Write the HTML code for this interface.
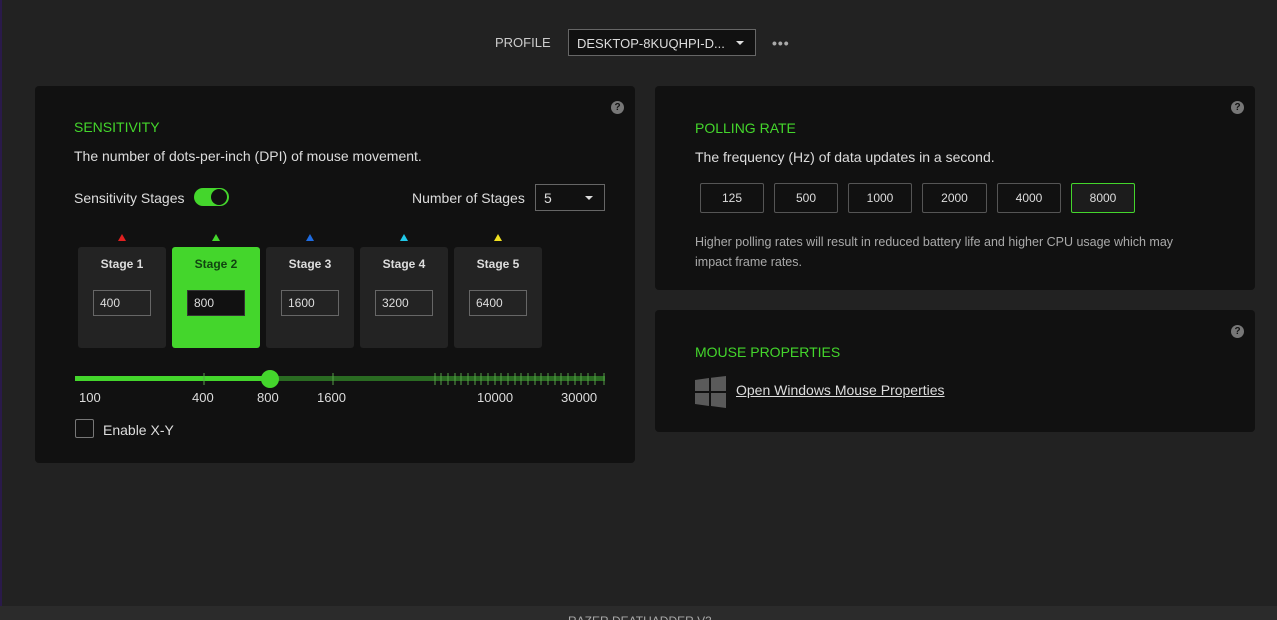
<!DOCTYPE html>
<html><head><style>
*{box-sizing:border-box;margin:0;padding:0}
html,body{width:1277px;height:620px;overflow:hidden}
body{background:#222;font-family:"Liberation Sans",sans-serif;color:#ddd;position:relative}
.abs{position:absolute}
.card{position:absolute;background:#111;border-radius:4px}
.h{position:absolute;color:#44d62c;font-size:14px}
.t{position:absolute;font-size:14px;color:#ddd}
.q{position:absolute;width:13px;height:13px;border-radius:50%;background:#777;color:#111;font-size:10px;font-weight:bold;text-align:center;line-height:13px}
.st{position:absolute;top:247px;width:88px;height:101px;background:#232323;border-radius:3px}
.st .l{position:absolute;top:10px;width:100%;text-align:center;font-size:12px;font-weight:bold;color:#ddd}
.st .i{position:absolute;left:15px;top:43px;width:58px;height:26px;border:1px solid #666;font-size:12px;padding-left:6px;line-height:24px;color:#ddd}
.tri{position:absolute;top:234px;width:0;height:0;border-left:4px solid transparent;border-right:4px solid transparent;border-bottom:7px solid}
.pb{position:absolute;top:183px;height:30px;border:1px solid #555;border-radius:2px;font-size:12px;text-align:center;line-height:28px;color:#ddd}
.lab{position:absolute;top:390px;font-size:13px;color:#ddd}
</style></head><body>
<div class="abs" style="left:0;top:0;width:2px;height:606px;background:#2a1a4a"></div>
<div class="t" style="left:495px;top:35px;font-size:13px;color:#ccc">PROFILE</div>
<div class="abs" style="left:568px;top:29px;width:188px;height:27px;border:1px solid #666;background:#111;font-size:13px;padding:6px 8px;color:#ddd">DESKTOP-8KUQHPI-D...</div>
<div class="abs" style="left:736px;top:41px;border-left:4px solid transparent;border-right:4px solid transparent;border-top:4px solid #ddd"></div>
<div class="t" style="left:772px;top:35px;color:#aaa;letter-spacing:1px;font-weight:bold">•••</div>

<div class="card" style="left:35px;top:86px;width:600px;height:377px"></div>
<div class="q" style="left:611px;top:101px">?</div>
<div class="h" style="left:74px;top:119px">SENSITIVITY</div>
<div class="t" style="left:74px;top:148px">The number of dots-per-inch (DPI) of mouse movement.</div>
<div class="t" style="left:74px;top:190px">Sensitivity Stages</div>
<div class="abs" style="left:194px;top:188px;width:35px;height:18px;border-radius:9px;background:#44d62c"></div>
<div class="abs" style="left:211px;top:189px;width:16px;height:16px;border-radius:50%;background:#111"></div>
<div class="t" style="left:412px;top:190px">Number of Stages</div>
<div class="abs" style="left:535px;top:184px;width:70px;height:27px;border:1px solid #666;font-size:14px;padding:5px 8px">5</div>
<div class="abs" style="left:585px;top:196px;border-left:4px solid transparent;border-right:4px solid transparent;border-top:4px solid #ddd"></div>

<div class="tri" style="left:118px;border-bottom-color:#e02020"></div>
<div class="tri" style="left:212px;border-bottom-color:#44d62c"></div>
<div class="tri" style="left:306px;border-bottom-color:#1e6be0"></div>
<div class="tri" style="left:400px;border-bottom-color:#20c8e8"></div>
<div class="tri" style="left:494px;border-bottom-color:#f0e020"></div>
<div class="st" style="left:78px"><div class="l">Stage 1</div><div class="i">400</div></div>
<div class="st" style="left:172px;background:#44d62c"><div class="l" style="color:#114411">Stage 2</div><div class="i" style="background:#111;border-color:#333">800</div></div>
<div class="st" style="left:266px"><div class="l">Stage 3</div><div class="i">1600</div></div>
<div class="st" style="left:360px"><div class="l">Stage 4</div><div class="i">3200</div></div>
<div class="st" style="left:454px"><div class="l">Stage 5</div><div class="i">6400</div></div>

<svg class="abs" style="left:70px;top:368px" width="540" height="22">
<rect x="5" y="8" width="530" height="5" fill="#2a6b22"/>
<rect x="5" y="8" width="195" height="5" fill="#44d62c"/>
<g stroke="#55a048" stroke-width="1">
<line x1="134" y1="5" x2="134" y2="17"/><line x1="263" y1="5" x2="263" y2="17"/>
<line x1="365" y1="5" x2="365" y2="17"/><line x1="371" y1="5" x2="371" y2="17"/><line x1="378" y1="5" x2="378" y2="17"/><line x1="385" y1="5" x2="385" y2="17"/><line x1="391" y1="5" x2="391" y2="17"/><line x1="398" y1="5" x2="398" y2="17"/><line x1="405" y1="5" x2="405" y2="17"/><line x1="411" y1="5" x2="411" y2="17"/><line x1="418" y1="5" x2="418" y2="17"/><line x1="425" y1="5" x2="425" y2="17"/><line x1="431" y1="5" x2="431" y2="17"/><line x1="438" y1="5" x2="438" y2="17"/><line x1="445" y1="5" x2="445" y2="17"/><line x1="451" y1="5" x2="451" y2="17"/><line x1="458" y1="5" x2="458" y2="17"/><line x1="465" y1="5" x2="465" y2="17"/><line x1="471" y1="5" x2="471" y2="17"/><line x1="478" y1="5" x2="478" y2="17"/><line x1="485" y1="5" x2="485" y2="17"/><line x1="491" y1="5" x2="491" y2="17"/><line x1="498" y1="5" x2="498" y2="17"/><line x1="505" y1="5" x2="505" y2="17"/><line x1="511" y1="5" x2="511" y2="17"/><line x1="518" y1="5" x2="518" y2="17"/><line x1="525" y1="5" x2="525" y2="17"/><line x1="534" y1="5" x2="534" y2="17"/>
</g>
<circle cx="200" cy="11" r="9" fill="#44d62c"/>
</svg>
<div class="lab" style="left:79px">100</div>
<div class="lab" style="left:192px">400</div>
<div class="lab" style="left:257px">800</div>
<div class="lab" style="left:317px">1600</div>
<div class="lab" style="left:477px">10000</div>
<div class="lab" style="left:561px">30000</div>
<div class="abs" style="left:75px;top:419px;width:19px;height:19px;border:1px solid #777;border-radius:2px"></div>
<div class="t" style="left:103px;top:422px">Enable X-Y</div>

<div class="card" style="left:655px;top:86px;width:600px;height:204px"></div>
<div class="q" style="left:1231px;top:101px">?</div>
<div class="h" style="left:695px;top:120px">POLLING RATE</div>
<div class="t" style="left:695px;top:149px">The frequency (Hz) of data updates in a second.</div>
<div class="pb" style="left:700px;width:64px">125</div>
<div class="pb" style="left:774px;width:64px">500</div>
<div class="pb" style="left:848px;width:64px">1000</div>
<div class="pb" style="left:922px;width:65px">2000</div>
<div class="pb" style="left:997px;width:64px">4000</div>
<div class="pb" style="left:1071px;width:64px;border-color:#44d62c;background:#1c1c1c">8000</div>
<div class="t" style="left:695px;top:232px;font-size:12.5px;color:#aaa;line-height:20px;width:505px">Higher polling rates will result in reduced battery life and higher CPU usage which may impact frame rates.</div>

<div class="card" style="left:655px;top:310px;width:600px;height:122px"></div>
<div class="q" style="left:1231px;top:325px">?</div>
<div class="h" style="left:695px;top:344px">MOUSE PROPERTIES</div>
<svg class="abs" style="left:695px;top:376px" width="32" height="32"><g fill="#5a5a5a"><path d="M0 4 L14 2 L14 15 L0 15Z"/><path d="M16 1.7 L31 0 L31 15 L16 15Z"/><path d="M0 17 L14 17 L14 30 L0 28Z"/><path d="M16 17 L31 17 L31 32 L16 30Z"/></g></svg>
<div class="t" style="left:736px;top:382px;text-decoration:underline">Open Windows Mouse Properties</div>

<div class="abs" style="left:0;top:606px;width:1277px;height:14px;background:#2b2b2b;overflow:hidden"><div class="abs" style="left:568px;top:8px;font-size:12px;color:#aaa;white-space:nowrap">RAZER DEATHADDER V3</div></div>
</body></html>
